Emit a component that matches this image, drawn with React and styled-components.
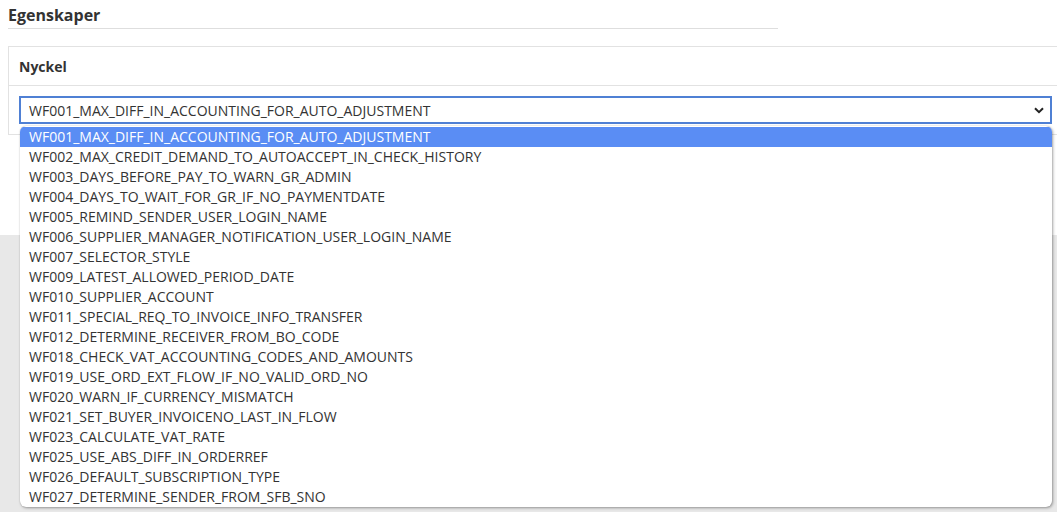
import React from "react";
import styled, { createGlobalStyle } from "styled-components";

const GlobalStyle = createGlobalStyle`
  body {
    margin: 0;
    font-family: "Open Sans", "Liberation Sans", sans-serif;
    color: #333;
    background: #e8e8e8;
  }
`;

const keys = [
  "WF001_MAX_DIFF_IN_ACCOUNTING_FOR_AUTO_ADJUSTMENT",
  "WF002_MAX_CREDIT_DEMAND_TO_AUTOACCEPT_IN_CHECK_HISTORY",
  "WF003_DAYS_BEFORE_PAY_TO_WARN_GR_ADMIN",
  "WF004_DAYS_TO_WAIT_FOR_GR_IF_NO_PAYMENTDATE",
  "WF005_REMIND_SENDER_USER_LOGIN_NAME",
  "WF006_SUPPLIER_MANAGER_NOTIFICATION_USER_LOGIN_NAME",
  "WF007_SELECTOR_STYLE",
  "WF009_LATEST_ALLOWED_PERIOD_DATE",
  "WF010_SUPPLIER_ACCOUNT",
  "WF011_SPECIAL_REQ_TO_INVOICE_INFO_TRANSFER",
  "WF012_DETERMINE_RECEIVER_FROM_BO_CODE",
  "WF018_CHECK_VAT_ACCOUNTING_CODES_AND_AMOUNTS",
  "WF019_USE_ORD_EXT_FLOW_IF_NO_VALID_ORD_NO",
  "WF020_WARN_IF_CURRENCY_MISMATCH",
  "WF021_SET_BUYER_INVOICENO_LAST_IN_FLOW",
  "WF023_CALCULATE_VAT_RATE",
  "WF025_USE_ABS_DIFF_IN_ORDERREF",
  "WF026_DEFAULT_SUBSCRIPTION_TYPE",
  "WF027_DETERMINE_SENDER_FROM_SFB_SNO",
];

function App() {
  const selected = keys[0];

  return (
    <>
      <GlobalStyle />
      <Page>
        <Section>
          <Title>Egenskaper</Title>
          <Card>
            <CardHeader>Nyckel</CardHeader>
            <CardBody>
              <SelectWrap>
                <SelectBox>
                  <span>{selected}</span>
                  <svg width="10" height="7" viewBox="0 0 10 7">
                    <path d="M1 1.2 L5 5.2 L9 1.2" fill="none" stroke="#222" strokeWidth="2" />
                  </svg>
                </SelectBox>
                <Listbox>
                  {keys.map((k) => (
                    <Option key={k} active={k === selected}>
                      {k}
                    </Option>
                  ))}
                </Listbox>
              </SelectWrap>
            </CardBody>
          </Card>
        </Section>
      </Page>
    </>
  );
}

export default App;

const Page = styled.div`
  min-height: 512px;
`;

const Section = styled.div`
  background: #fff;
  padding: 3px 0 100px 8px;
`;

const Title = styled.h2`
  margin: 0;
  width: 770px;
  font-size: 16px;
  font-weight: 700;
  line-height: 24px;
  color: #333;
  border-bottom: 1px solid #dedede;
  padding-bottom: 1px;
`;

const Card = styled.div`
  margin-top: 17px;
  border: 1px solid #e2e2e2;
  border-right: none;
`;

const CardHeader = styled.div`
  height: 38px;
  padding: 0 10px;
  display: flex;
  align-items: center;
  font-size: 14px;
  font-weight: 700;
  color: #333;
  border-bottom: 1px solid #e2e2e2;
`;

const CardBody = styled.div`
  padding: 10px 5px 10px 10px;
`;

const SelectWrap = styled.div`
  position: relative;
`;

const SelectBox = styled.div`
  height: 28px;
  box-sizing: border-box;
  border: 2px solid #4f80d4;
  background: #fff;
  display: flex;
  align-items: center;
  justify-content: space-between;
  padding: 0 6px 0 8px;
  font-size: 14px;
  color: #333;
`;

const Listbox = styled.ul`
  position: absolute;
  left: 1px;
  right: 0;
  top: 30px;
  margin: 0;
  padding: 1px 0 0;
  list-style: none;
  background: #fff;
  border-radius: 6px;
  overflow: hidden;
  box-shadow: 1px 1px 3px rgba(0, 0, 0, 0.35), 0 0 1px rgba(0, 0, 0, 0.3);
`;

const Option = styled.li`
  height: 20px;
  line-height: 20px;
  padding-left: 9px;
  font-size: 14px;
  white-space: nowrap;
  color: ${(p) => (p.active ? "#fff" : "#333")};
  background: ${(p) => (p.active ? "#5a8df4" : "transparent")};
`;
